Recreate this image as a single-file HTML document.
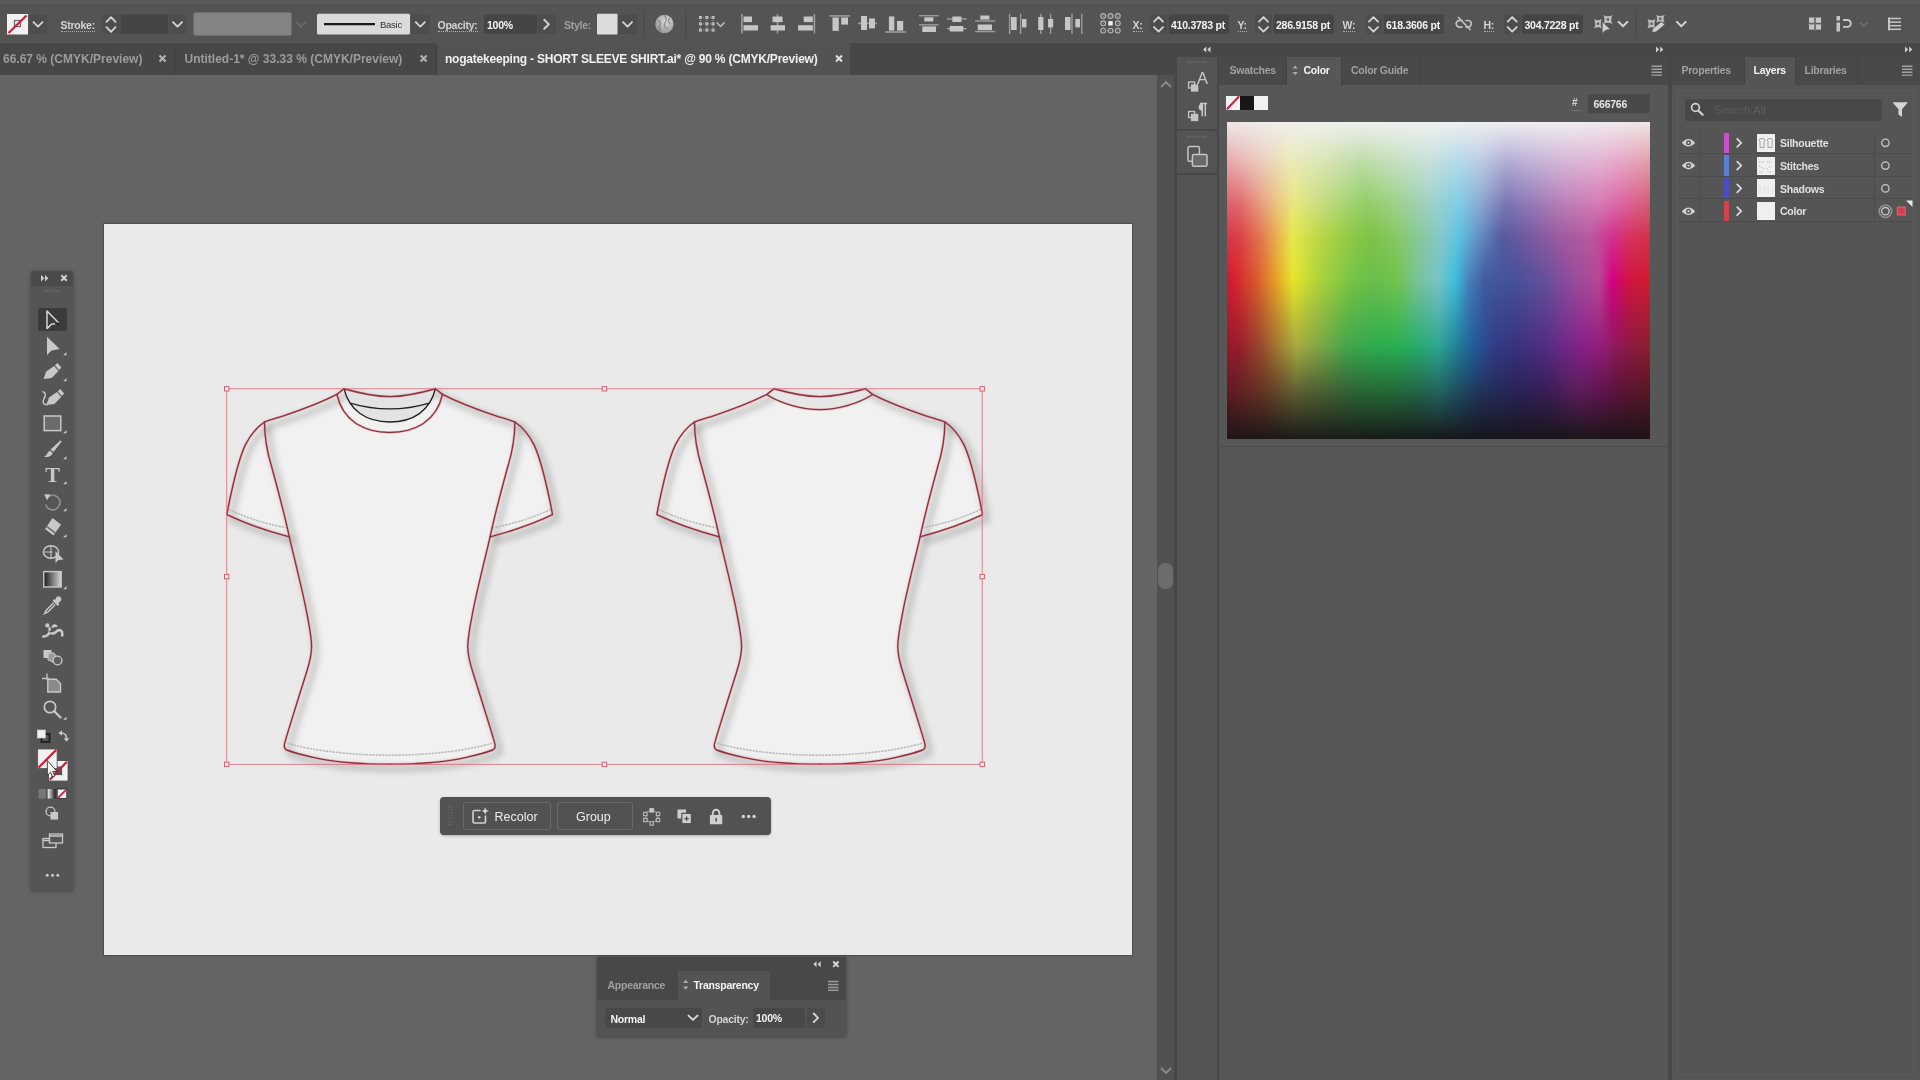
<!DOCTYPE html>
<html lang="en">
<head>
<meta charset="utf-8">
<title>nogatekeeping - SHORT SLEEVE SHIRT.ai</title>
<style>
html,body{margin:0;padding:0;background:#646464;}
body{width:1920px;height:1080px;overflow:hidden;position:relative;font-family:"Liberation Sans",sans-serif;font-size:11px;color:#d4d4d4;}
.a{position:absolute;}
.t{position:absolute;white-space:nowrap;line-height:14px;height:14px;font-size:10.5px;font-weight:bold;letter-spacing:-0.25px;filter:blur(0.3px);}
.dim{color:#a0a0a0;}
.wh{color:#f4f4f4;}
svg{position:absolute;overflow:visible;}
.fld{position:absolute;background:#464646;border-radius:2px;}
.btn{position:absolute;background:#4e4e4e;border-radius:2px;}
.ic{fill:#cfcfcf;}
.st{fill:none;stroke:#cfcfcf;stroke-width:1.6;stroke-linecap:round;stroke-linejoin:round;}
</style>
</head>
<body>
<!-- ===== base regions ===== -->
<div class="a" id="canvas" style="left:0;top:75px;width:1157px;height:1005px;background:#646464;"></div>
<div class="a" id="artboard" style="left:104px;top:224px;width:1028px;height:731px;background:#eaeaea;box-shadow:0 0 0 1px #4f4f4f, 0 0 3px rgba(0,0,0,.25);"></div>
<div class="a" id="ctrlbar" style="left:0;top:0;width:1920px;height:43px;background:#545454;"></div>
<div class="a" style="left:0;top:0;width:1920px;height:4px;background:#5a5a5a;"></div>
<div class="a" id="tabbar" style="left:0;top:43px;width:1920px;height:32px;background:#474747;"></div>
<!-- scrollbar -->
<div class="a" style="left:1157px;top:75px;width:17px;height:1005px;background:#515151;"></div>
<div class="a" style="left:1158px;top:563px;width:15px;height:26px;border-radius:7px;background:#6c6c6c;"></div>
<svg style="left:1159px;top:79px" width="14" height="10"><path class="st" d="M2.5 7.5 L7 3 L11.5 7.5" style="stroke:#8a8a8a;stroke-width:1.8"/></svg>
<svg style="left:1159px;top:1066px" width="14" height="10"><path class="st" d="M2.5 2.5 L7 7 L11.5 2.5" style="stroke:#8a8a8a;stroke-width:1.8"/></svg>
<!-- right docks -->
<div class="a" style="left:1174px;top:43px;width:746px;height:1037px;background:#474747;"></div>
<div class="a" id="dock" style="left:1177px;top:57px;width:40px;height:1023px;background:#545454;"></div>
<div class="a" id="colpanel" style="left:1219px;top:57px;width:449px;height:1023px;background:#575757;"></div>
<div class="a" id="rpanel" style="left:1672px;top:57px;width:248px;height:1023px;background:#555555;"></div>
<!-- ===== control bar ===== -->
<svg style="left:0;top:0" width="1920" height="43" viewBox="0 0 1920 43">
<rect x="7.0" y="14.0" width="21.0" height="20.5" fill="#f1f1f1" />
<rect x="14.5" y="20.5" width="6" height="6" fill="none" stroke="#666" stroke-width="1.2"/>
<line x1="8.5" y1="33.0" x2="26.5" y2="15.5" stroke="#c8203c" stroke-width="2.2" />
<rect x="29.5" y="14.5" width="17.5" height="19.5" fill="#4d4d4d" rx="2"/>
<path d="M33.5 22.1 L38.0 26.6 L42.5 22.1" fill="none" stroke="#d2d2d2" stroke-width="1.9" stroke-linecap="round" stroke-linejoin="round"/>
<rect x="102.0" y="14.5" width="18.0" height="19.5" fill="#4d4d4d" rx="2"/>
<path d="M106.5 21.8 L111.0 17.2 L115.5 21.8" fill="none" stroke="#d2d2d2" stroke-width="1.9" stroke-linecap="round" stroke-linejoin="round"/>
<path d="M106.5 27.2 L111.0 31.8 L115.5 27.2" fill="none" stroke="#d2d2d2" stroke-width="1.9" stroke-linecap="round" stroke-linejoin="round"/>
<rect x="120.6" y="14.5" width="47.4" height="19.5" fill="#454545" />
<rect x="168.6" y="14.5" width="17.9" height="19.5" fill="#4d4d4d" rx="2"/>
<path d="M173.0 22.1 L177.5 26.6 L182.0 22.1" fill="none" stroke="#d2d2d2" stroke-width="1.9" stroke-linecap="round" stroke-linejoin="round"/>
<rect x="193.5" y="12.5" width="98.0" height="23.1" fill="#848484" rx="1.5"/>
<path d="M296.5 22.1 L301.0 26.6 L305.5 22.1" fill="none" stroke="#6a6a6a" stroke-width="1.9" stroke-linecap="round" stroke-linejoin="round"/>
<rect x="317.0" y="13.7" width="93.0" height="20.8" fill="#dadada" rx="1.5"/>
<line x1="324.0" y1="24.2" x2="375.0" y2="24.2" stroke="#1a1a1a" stroke-width="2.2" />
<rect x="411.0" y="14.5" width="18.5" height="19.5" fill="#4d4d4d" rx="2"/>
<path d="M415.8 22.1 L420.3 26.6 L424.8 22.1" fill="none" stroke="#d2d2d2" stroke-width="1.9" stroke-linecap="round" stroke-linejoin="round"/>
<rect x="484.0" y="14.5" width="53.0" height="19.5" fill="#454545" rx="2"/>
<rect x="537.6" y="14.5" width="18.4" height="19.5" fill="#4d4d4d" rx="2"/>
<path d="M544.2 19.8 L548.8 24.3 L544.2 28.8" fill="none" stroke="#d2d2d2" stroke-width="1.9" stroke-linecap="round" stroke-linejoin="round"/>
<rect x="597.0" y="13.7" width="20.5" height="20.8" fill="#dcdcdc" rx="1"/>
<rect x="618.3" y="14.5" width="18.7" height="19.5" fill="#4d4d4d" rx="2"/>
<path d="M623.0 22.1 L627.5 26.6 L632.0 22.1" fill="none" stroke="#d2d2d2" stroke-width="1.9" stroke-linecap="round" stroke-linejoin="round"/>
<line x1="644.0" y1="10.0" x2="644.0" y2="39.0" stroke="#4b4b4b" stroke-width="1.2" />
<line x1="686.0" y1="10.0" x2="686.0" y2="39.0" stroke="#4b4b4b" stroke-width="1.2" />
<defs><radialGradient id="gl" cx="0.6" cy="0.35" r="0.75"><stop offset="0" stop-color="#dcdcdc"/><stop offset="1" stop-color="#8e8e8e"/></radialGradient></defs>
<circle cx="664.4" cy="24" r="9.2" fill="url(#gl)"/>
<path d="M658 20 q3 2 2 5 q-2 3 1 6 M664 15 q4 4 1 8 q-2 4 3 6 M670 18 q-3 3 0 6" fill="none" stroke="#7c7c7c" stroke-width="1.3" opacity=".8"/>
<rect x="699.0" y="16.0" width="3.0" height="3.0" fill="#c6c6c6" />
<rect x="699.0" y="22.3" width="3.0" height="3.0" fill="#c6c6c6" />
<rect x="699.0" y="28.6" width="3.0" height="3.0" fill="#c6c6c6" />
<rect x="705.3" y="16.0" width="3.0" height="3.0" fill="#c6c6c6" />
<rect x="705.3" y="22.3" width="3.0" height="3.0" fill="#c6c6c6" />
<rect x="705.3" y="28.6" width="3.0" height="3.0" fill="#c6c6c6" />
<rect x="711.6" y="16.0" width="3.0" height="3.0" fill="#c6c6c6" />
<rect x="711.6" y="22.3" width="3.0" height="3.0" fill="#c6c6c6" />
<rect x="711.6" y="28.6" width="3.0" height="3.0" fill="#c6c6c6" />
<line x1="700.5" y1="17.5" x2="714.0" y2="17.5" stroke="#9a9a9a" stroke-width="1" stroke-dasharray="1.2 1.2"/>
<line x1="700.5" y1="17.5" x2="700.5" y2="31.0" stroke="#9a9a9a" stroke-width="1" stroke-dasharray="1.2 1.2"/>
<line x1="700.5" y1="23.8" x2="714.0" y2="23.8" stroke="#9a9a9a" stroke-width="1" stroke-dasharray="1.2 1.2"/>
<line x1="706.8" y1="17.5" x2="706.8" y2="31.0" stroke="#9a9a9a" stroke-width="1" stroke-dasharray="1.2 1.2"/>
<line x1="700.5" y1="30.1" x2="714.0" y2="30.1" stroke="#9a9a9a" stroke-width="1" stroke-dasharray="1.2 1.2"/>
<line x1="713.1" y1="17.5" x2="713.1" y2="31.0" stroke="#9a9a9a" stroke-width="1" stroke-dasharray="1.2 1.2"/>
<path d="M717.1 22.9 L720.6 26.4 L724.1 22.9" fill="none" stroke="#b4b4b4" stroke-width="1.5" stroke-linecap="round" stroke-linejoin="round"/>
<line x1="741.9" y1="14.0" x2="741.9" y2="33.4" stroke="#9c9c9c" stroke-width="1.6" />
<rect x="743.5" y="16.5" width="8.5" height="5.6" fill="#c6c6c6" />
<rect x="743.5" y="25.2" width="14.5" height="5.3" fill="#c6c6c6" />
<line x1="777.5" y1="14.0" x2="777.5" y2="33.4" stroke="#9c9c9c" stroke-width="1.6" />
<rect x="772.5" y="16.5" width="10.0" height="5.6" fill="#c6c6c6" />
<rect x="770.6" y="25.2" width="14.4" height="5.3" fill="#c6c6c6" />
<line x1="814.4" y1="14.0" x2="814.4" y2="33.4" stroke="#9c9c9c" stroke-width="1.6" />
<rect x="803.7" y="16.5" width="9.1" height="5.6" fill="#c6c6c6" />
<rect x="798.0" y="25.2" width="14.8" height="5.3" fill="#c6c6c6" />
<line x1="829.4" y1="15.9" x2="850.0" y2="15.9" stroke="#9c9c9c" stroke-width="1.6" />
<rect x="832.5" y="17.5" width="6.3" height="13.4" fill="#c6c6c6" />
<rect x="841.2" y="17.5" width="6.8" height="7.1" fill="#c6c6c6" />
<line x1="858.0" y1="23.4" x2="877.0" y2="23.4" stroke="#9c9c9c" stroke-width="1.6" />
<rect x="861.0" y="16.0" width="6.0" height="14.0" fill="#c6c6c6" />
<rect x="869.0" y="18.4" width="6.0" height="10.0" fill="#c6c6c6" />
<line x1="885.0" y1="32.0" x2="906.0" y2="32.0" stroke="#9c9c9c" stroke-width="1.6" />
<rect x="888.9" y="16.4" width="5.4" height="14.2" fill="#c6c6c6" />
<rect x="897.0" y="21.0" width="6.2" height="9.6" fill="#c6c6c6" />
<line x1="919.0" y1="15.7" x2="938.6" y2="15.7" stroke="#9c9c9c" stroke-width="1.4" />
<line x1="919.0" y1="24.8" x2="938.6" y2="24.8" stroke="#9c9c9c" stroke-width="1.4" />
<rect x="924.3" y="17.3" width="9.1" height="4.2" fill="#c6c6c6" />
<rect x="922.3" y="26.4" width="13.7" height="5.6" fill="#c6c6c6" />
<line x1="947.0" y1="19.0" x2="966.6" y2="19.0" stroke="#9c9c9c" stroke-width="1.4" />
<line x1="947.0" y1="28.7" x2="966.6" y2="28.7" stroke="#9c9c9c" stroke-width="1.4" />
<rect x="952.3" y="16.5" width="9.1" height="5.5" fill="#c6c6c6" />
<rect x="949.7" y="26.0" width="13.6" height="5.5" fill="#c6c6c6" />
<line x1="975.0" y1="21.0" x2="995.2" y2="21.0" stroke="#9c9c9c" stroke-width="1.4" />
<line x1="975.0" y1="31.6" x2="995.2" y2="31.6" stroke="#9c9c9c" stroke-width="1.4" />
<rect x="980.3" y="15.5" width="9.1" height="4.1" fill="#c6c6c6" />
<rect x="977.7" y="24.5" width="14.3" height="5.7" fill="#c6c6c6" />
<line x1="1009.6" y1="13.8" x2="1009.6" y2="34.0" stroke="#9c9c9c" stroke-width="1.4" />
<line x1="1020.6" y1="13.8" x2="1020.6" y2="34.0" stroke="#9c9c9c" stroke-width="1.4" />
<rect x="1011.0" y="17.0" width="5.7" height="13.0" fill="#c6c6c6" />
<rect x="1022.0" y="19.0" width="4.5" height="8.4" fill="#c6c6c6" />
<line x1="1040.8" y1="13.8" x2="1040.8" y2="34.0" stroke="#9c9c9c" stroke-width="1.4" />
<line x1="1050.6" y1="13.8" x2="1050.6" y2="34.0" stroke="#9c9c9c" stroke-width="1.4" />
<rect x="1038.2" y="17.0" width="5.2" height="13.0" fill="#c6c6c6" />
<rect x="1048.0" y="19.0" width="5.2" height="8.4" fill="#c6c6c6" />
<line x1="1072.0" y1="13.8" x2="1072.0" y2="34.0" stroke="#9c9c9c" stroke-width="1.4" />
<line x1="1081.8" y1="13.8" x2="1081.8" y2="34.0" stroke="#9c9c9c" stroke-width="1.4" />
<rect x="1065.0" y="17.0" width="5.5" height="13.0" fill="#c6c6c6" />
<rect x="1075.3" y="19.0" width="4.7" height="8.4" fill="#c6c6c6" />
<circle cx="1103.2" cy="16.0" r="2.4" fill="none" stroke="#b8b8b8" stroke-width="1.1"/>
<circle cx="1103.2" cy="23.3" r="2.4" fill="none" stroke="#b8b8b8" stroke-width="1.1"/>
<circle cx="1103.2" cy="30.6" r="2.4" fill="none" stroke="#b8b8b8" stroke-width="1.1"/>
<circle cx="1110.5" cy="16.0" r="2.4" fill="none" stroke="#b8b8b8" stroke-width="1.1"/>
<rect x="1108.3" y="21.1" width="4.4" height="4.4" fill="#f0f0f0" />
<circle cx="1110.5" cy="30.6" r="2.4" fill="none" stroke="#b8b8b8" stroke-width="1.1"/>
<circle cx="1117.8" cy="16.0" r="2.4" fill="none" stroke="#b8b8b8" stroke-width="1.1"/>
<circle cx="1117.8" cy="23.3" r="2.4" fill="none" stroke="#b8b8b8" stroke-width="1.1"/>
<circle cx="1117.8" cy="30.6" r="2.4" fill="none" stroke="#b8b8b8" stroke-width="1.1"/>
<rect x="1103.2" y="16" width="14.6" height="14.6" fill="none" stroke="#9a9a9a" stroke-width="1" stroke-dasharray="1.2 1.2"/>
<rect x="1150.0" y="14.5" width="17.0" height="19.5" fill="#4d4d4d" rx="2"/>
<path d="M1154.0 21.6 L1158.5 17.1 L1163.0 21.6" fill="none" stroke="#d2d2d2" stroke-width="1.9" stroke-linecap="round" stroke-linejoin="round"/>
<path d="M1154.0 27.1 L1158.5 31.6 L1163.0 27.1" fill="none" stroke="#d2d2d2" stroke-width="1.9" stroke-linecap="round" stroke-linejoin="round"/>
<rect x="1168.7" y="14.5" width="60.0" height="19.5" fill="#454545" rx="2"/>
<rect x="1255.0" y="14.5" width="17.0" height="19.5" fill="#4d4d4d" rx="2"/>
<path d="M1259.0 21.6 L1263.5 17.1 L1268.0 21.6" fill="none" stroke="#d2d2d2" stroke-width="1.9" stroke-linecap="round" stroke-linejoin="round"/>
<path d="M1259.0 27.1 L1263.5 31.6 L1268.0 27.1" fill="none" stroke="#d2d2d2" stroke-width="1.9" stroke-linecap="round" stroke-linejoin="round"/>
<rect x="1273.7" y="14.5" width="60.0" height="19.5" fill="#454545" rx="2"/>
<rect x="1365.0" y="14.5" width="17.0" height="19.5" fill="#4d4d4d" rx="2"/>
<path d="M1369.0 21.6 L1373.5 17.1 L1378.0 21.6" fill="none" stroke="#d2d2d2" stroke-width="1.9" stroke-linecap="round" stroke-linejoin="round"/>
<path d="M1369.0 27.1 L1373.5 31.6 L1378.0 27.1" fill="none" stroke="#d2d2d2" stroke-width="1.9" stroke-linecap="round" stroke-linejoin="round"/>
<rect x="1383.7" y="14.5" width="60.0" height="19.5" fill="#454545" rx="2"/>
<rect x="1503.7" y="14.5" width="17.0" height="19.5" fill="#4d4d4d" rx="2"/>
<path d="M1507.7 21.6 L1512.2 17.1 L1516.7 21.6" fill="none" stroke="#d2d2d2" stroke-width="1.9" stroke-linecap="round" stroke-linejoin="round"/>
<path d="M1507.7 27.1 L1512.2 31.6 L1516.7 27.1" fill="none" stroke="#d2d2d2" stroke-width="1.9" stroke-linecap="round" stroke-linejoin="round"/>
<rect x="1522.0" y="14.5" width="61.0" height="19.5" fill="#454545" rx="2"/>
<g fill="none" stroke="#c0c0c0" stroke-width="1.7" stroke-linecap="round"><path d="M1462 20.5 h-2.5 a3.3 3.3 0 0 0 0 6.6 h2.5 M1466 20.5 h2 a3.3 3.3 0 0 1 0 6.6 h-2"/><path d="M1458.5 17.5 L1470 29.5"/></g>
<path d="M1594.2 18.9 Q1598.0 21.6 1601.8 18.9 Q1599.7 23.8 1601.8 28.6 Q1598.0 25.9 1594.2 28.6 Q1596.3 23.8 1594.2 18.9Z" fill="#bcbcbc"/>
<rect x="1596.9" y="22.6" width="2.2" height="2.2" fill="#555"/>
<path d="M1603.3 14.9 Q1607.9 17.4 1612.5 14.9 Q1610.0 19.4 1612.5 24.0 Q1607.9 21.5 1603.3 24.0 Q1605.8 19.4 1603.3 14.9Z" fill="#bcbcbc"/>
<rect x="1606.8" y="18.3" width="2.2" height="2.2" fill="#555"/>
<path d="M1602.2 21.7 L1602.2 33.4 L1605.2 30.4 L1610.4 29.2 Z" fill="#cdcdcd" stroke="#545454" stroke-width=".7"/>
<path d="M1618.5 21.8 L1623.0 26.2 L1627.5 21.8" fill="none" stroke="#d2d2d2" stroke-width="1.9" stroke-linecap="round" stroke-linejoin="round"/>
<line x1="1636.0" y1="10.0" x2="1636.0" y2="39.0" stroke="#4b4b4b" stroke-width="1.2" />
<path d="M1647.5 18.9 Q1651.5 21.6 1655.5 18.9 Q1653.3 23.8 1655.5 28.6 Q1651.5 25.9 1647.5 28.6 Q1649.7 23.8 1647.5 18.9Z" fill="#bcbcbc"/>
<rect x="1650.4" y="22.6" width="2.2" height="2.2" fill="#555"/>
<path d="M1656.0 14.9 Q1660.3 17.0 1664.7 14.9 Q1662.3 18.7 1664.7 22.5 Q1660.3 20.4 1656.0 22.5 Q1658.4 18.7 1656.0 14.9Z" fill="#bcbcbc"/>
<rect x="1659.2" y="17.6" width="2.2" height="2.2" fill="#555"/>
<path d="M1651.8 32.3 L1652.8 28.6 L1661.6 21.6 L1664.9 24.6 L1656 32 Z" fill="#cdcdcd" stroke="#545454" stroke-width=".7"/>
<path d="M1676.8 21.8 L1681.3 26.2 L1685.8 21.8" fill="none" stroke="#d2d2d2" stroke-width="1.9" stroke-linecap="round" stroke-linejoin="round"/>
<rect x="1809.0" y="17.5" width="5.3" height="5.3" fill="#c6c6c6" />
<rect x="1815.8" y="17.5" width="5.3" height="5.3" fill="#c6c6c6" />
<rect x="1809.0" y="24.3" width="5.3" height="5.3" fill="#c6c6c6" />
<rect x="1815.8" y="24.3" width="5.3" height="5.3" fill="#c6c6c6" />
<line x1="1808.0" y1="24.0" x2="1822.0" y2="24.0" stroke="#8a8a8a" stroke-width="1" stroke-dasharray="1.5 1.5"/>
<line x1="1815.0" y1="17.0" x2="1815.0" y2="31.0" stroke="#8a8a8a" stroke-width="1" stroke-dasharray="1.5 1.5"/>
<rect x="1836.5" y="16.0" width="3.5" height="4.5" fill="#c6c6c6" />
<rect x="1836.5" y="22.5" width="3.5" height="9.0" fill="#c6c6c6" />
<path d="M1843 20 h4.5 a3.4 3.4 0 0 1 0 6.8 h-4.5" fill="none" stroke="#c6c6c6" stroke-width="1.8"/>
<path d="M1860.2 22.6 L1863.7 26.1 L1867.2 22.6" fill="none" stroke="#6e6e6e" stroke-width="1.5" stroke-linecap="round" stroke-linejoin="round"/>
<line x1="1888.0" y1="18.5" x2="1901.0" y2="18.5" stroke="#c6c6c6" stroke-width="1.5" />
<line x1="1888.0" y1="22.1" x2="1901.0" y2="22.1" stroke="#c6c6c6" stroke-width="1.5" />
<line x1="1888.0" y1="25.7" x2="1901.0" y2="25.7" stroke="#c6c6c6" stroke-width="1.5" />
<line x1="1888.0" y1="29.3" x2="1901.0" y2="29.3" stroke="#c6c6c6" stroke-width="1.5" />
<rect x="1888.0" y="17.6" width="2.0" height="12.8" fill="#c6c6c6" />
</svg>
<div class="t " style="left:60.5px;top:18px;border-bottom:1px dotted #b0b0b0;height:13px;">Stroke:</div>
<div class="t " style="left:380px;top:18px;color:#333;font-size:9.5px;font-weight:normal;">Basic</div>
<div class="t " style="left:437.5px;top:18px;border-bottom:1px dotted #b0b0b0;height:13px;">Opacity:</div>
<div class="t wh" style="left:487px;top:17.5px;">100%</div>
<div class="t dim" style="left:564px;top:18px;">Style:</div>
<div class="t " style="left:1132.5px;top:18px;border-bottom:1px dotted #b0b0b0;height:13px;">X:</div>
<div class="t wh" style="left:1171px;top:17.5px;">410.3783 pt</div>
<div class="t " style="left:1237.5px;top:18px;border-bottom:1px dotted #b0b0b0;height:13px;">Y:</div>
<div class="t wh" style="left:1276px;top:17.5px;">286.9158 pt</div>
<div class="t " style="left:1342.5px;top:18px;border-bottom:1px dotted #b0b0b0;height:13px;">W:</div>
<div class="t wh" style="left:1386px;top:17.5px;">618.3606 pt</div>
<div class="t " style="left:1483.5px;top:18px;border-bottom:1px dotted #b0b0b0;height:13px;">H:</div>
<div class="t wh" style="left:1524.5px;top:17.5px;">304.7228 pt</div>
<!-- ===== document tabs ===== -->
<div class="a" style="left:436px;top:43px;width:414px;height:32px;background:#535353;"></div>
<div class="a" style="left:174px;top:45px;width:1px;height:30px;background:#3e3e3e;"></div>
<div class="a" style="left:436px;top:45px;width:1px;height:30px;background:#3e3e3e;"></div>
<div class="t" style="left:3px;top:51.5px;font-size:12px;letter-spacing:0;color:#9c9c9c;">66.67 % (CMYK/Preview)</div>
<div class="t" style="left:184.5px;top:51.5px;font-size:12px;letter-spacing:0;color:#9c9c9c;">Untitled-1* @ 33.33 % (CMYK/Preview)</div>
<div class="t" style="left:445px;top:51.5px;font-size:12px;letter-spacing:-0.21px;color:#f0f0f0;">nogatekeeping - SHORT SLEEVE SHIRT.ai* @ 90 % (CMYK/Preview)</div>
<svg style="left:0;top:43px" width="860" height="32" viewBox="0 43 860 32">
<g fill="none" stroke-width="2" stroke-linecap="butt">
<path d="M159.5 55.5 l6 6 m0 -6 l-6 6" stroke="#b4b4b4"/>
<path d="M420.7 55.5 l6 6 m0 -6 l-6 6" stroke="#b4b4b4"/>
<path d="M836 55.5 l6 6 m0 -6 l-6 6" stroke="#e2e2e2"/>
</g>
</svg>
<!-- ===== tools panel ===== -->
<div class="a" style="left:31px;top:271px;width:42px;height:619px;background:#555555;border-radius:3px;box-shadow:0 1px 4px rgba(0,0,0,.35);"></div>
<div class="a" style="left:31px;top:271px;width:42px;height:15px;background:#4a4a4a;border-radius:3px 3px 0 0;"></div>
<div class="a" style="left:38px;top:307.5px;width:29px;height:23px;background:#3b3b3b;border-radius:2.5px;"></div>
<svg style="left:28px;top:265px" width="50" height="630" viewBox="28 265 50 630">
<defs>
<linearGradient id="tg1" x1="0" x2="1"><stop offset="0" stop-color="#1c1c1c"/><stop offset="1" stop-color="#d6d6d6"/></linearGradient>
<linearGradient id="tg2" x1="0" x2="1"><stop offset="0" stop-color="#f2f2f2"/><stop offset="1" stop-color="#1a1a1a"/></linearGradient>
</defs>
<!-- header -->
<path d="M41 275 l3.4 3.2 -3.4 3.2z M45 275 l3.4 3.2 -3.4 3.2z" fill="#cfcfcf"/>
<path d="M61.3 275.3 l5.4 5.4 m0 -5.4 l-5.4 5.4" stroke="#d4d4d4" stroke-width="2" fill="none"/>
<path d="M44 290.7 h16" stroke="#6e6e6e" stroke-width="1.6" stroke-dasharray="1.4 1.4"/>
<g fill="#c8c8c8">
<!-- selection (outline) -->
<path d="M47 311 L47 328.6 L51.4 324.3 L58.8 323 Z" fill="#3b3b3b" stroke="#d6d6d6" stroke-width="1.5" stroke-linejoin="round"/>
<path d="M55 323.4 h4.5" stroke="#1d1d1d" stroke-width="1.6"/>
<!-- direct selection -->
<path d="M47 336.7 L47 355 L51.6 350.6 L59.7 349 Z"/>
<path d="M66.5 352 v3.3 h-3.3z"/>
<!-- pen -->
<path d="M43.6 379 L46.2 371.6 L54.2 366 L58.4 371 L51.6 378 Z"/>
<path d="M54.9 365.2 L57.4 363 L61.4 367.6 L59 370 Z"/>
<path d="M66.5 378 v3.3 h-3.3z"/>
<!-- curvature -->
<path d="M46.4 405 L49 397.6 L57 392 L61.2 397 L54.4 404 Z"/>
<path d="M57.7 391.2 L60.2 389 L64.2 393.6 L61.8 396 Z"/>
<path d="M42.5 391.5 c3.5 1 3.5 4 1.5 7 c-2 3.5 -1 6.5 3.5 6.3" fill="none" stroke="#c8c8c8" stroke-width="1.4"/>
<!-- rectangle -->
<rect x="44.2" y="416" width="16.6" height="14.6" fill="#6b6b6b" stroke="#c8c8c8" stroke-width="1.5"/>
<path d="M66.5 430 v3.3 h-3.3z"/>
<!-- brush -->
<path d="M60.6 440.3 L61.6 441.4 L53.5 452 L50.6 449.6 Z"/>
<path d="M49.8 450.4 L52.7 452.9 C51.5 456.5 47 457.4 44 457 C46.8 455.6 47 452.6 49.8 450.4 Z"/>
<path d="M66.5 456 v3.3 h-3.3z"/>
<!-- eraser -->
<path d="M52.5 518 L61 524.5 L53.5 535.5 L45 529 Z"/>
<path d="M46.8 526.6 L55.2 533" stroke="#555" stroke-width="1.3"/>
<path d="M66.5 534 v3.3 h-3.3z"/>
<!-- rotate -->
<path d="M49 496.2 A7.3 7.3 0 1 1 45.6 504.5" fill="none" stroke="#8f8f8f" stroke-width="1.6"/>
<path d="M44.2 494.3 L50.6 494.6 L47 500.3 Z"/>
<path d="M66.5 508 v3.3 h-3.3z"/>
<!-- shape builder -->
<ellipse cx="51" cy="552" rx="7.6" ry="6.2" fill="none" stroke="#c8c8c8" stroke-width="1.4"/>
<path d="M51 546 v12 M43.6 552 h9" stroke="#c8c8c8" stroke-width="1.1" fill="none"/>
<path d="M55.5 551 L55.5 563 L58.5 560 L63.5 559.6 Z"/>
<!-- gradient -->
<rect x="43.8" y="571.6" width="17.4" height="15.4" fill="url(#tg1)" stroke="#c8c8c8" stroke-width="1.4"/>
<path d="M66.5 586 v3.3 h-3.3z"/>
<!-- eyedropper -->
<path d="M56.4 597.3 a2.8 2.8 0 0 1 4 4 l-2 2 1 1 -1.6 1.6 -5.2 -5.2 1.6 -1.6 1 1z"/>
<path d="M53.6 602.8 L46 610.4 L44.5 613.6 L47.7 612.2 L55.3 604.6" fill="none" stroke="#c8c8c8" stroke-width="1.4"/>
<!-- puppet warp -->
<g fill="none" stroke="#c8c8c8" stroke-width="2.5" stroke-linecap="round" stroke-linejoin="round">
<path d="M43.2 636.6 q4.300 -.3 6 -3.600 q1.300 -2.700 .3 -4.600"/>
<path d="M49.500 632.500 q3.500 2.200 6.500 -.5 q2.200 -2.600 4.600 -1.600 q2.200 1.200 1.600 5.200"/>
<path d="M52.800 626.600 q1.600 -1.600 3.400 -.6"/>
</g>
<circle cx="47.300" cy="625.400" r="2.100"/>
<circle cx="50.300" cy="631.500" r="1" fill="#555"/>
<!-- blend -->
<rect x="43.5" y="650" width="8" height="8"/>
<path d="M48 653 h6 l3 4 -4 5 -5 -2z" fill="#9a9a9a" stroke="#c8c8c8" stroke-width="1"/>
<circle cx="57.5" cy="660.5" r="4.4" fill="#5e5e5e" stroke="#c8c8c8" stroke-width="1.4"/>
<!-- artboard -->
<path d="M47 673.5 v6 M42 678.5 h7" stroke="#c8c8c8" stroke-width="1.3" fill="none"/>
<path d="M47.8 679.3 h8.400 l4.300 4.300 v8.400 h-12.700z" fill="#8a8a8a" stroke="#c8c8c8" stroke-width="1.4"/>
<!-- zoom -->
<circle cx="50" cy="707" r="5.700" fill="none" stroke="#c8c8c8" stroke-width="1.700"/>
<path d="M54.300 711.300 L60.500 717.500" stroke="#c8c8c8" stroke-width="2.300" stroke-linecap="round"/>
<path d="M66.500 716.500 v3.300 h-3.300z"/>
</g>
<!-- default fill/stroke mini -->
<rect x="41.500" y="734" width="8" height="8" fill="#555" stroke="#1e1e1e" stroke-width="1.800"/>
<rect x="37.300" y="730" width="8" height="8" fill="#f0f0f0" stroke="#cfcfcf" stroke-width=".6"/>
<!-- swap -->
<path d="M60.500 733 c4 -.5 6 2 6 5.500" fill="none" stroke="#c8c8c8" stroke-width="1.600"/>
<path d="M58.400 733 l3.600 -2.800 v5.600z M66.500 741.800 l-2.900 -3.600 h5.800z" fill="#c8c8c8"/>
<!-- stroke box (behind) -->
<rect x="49" y="761" width="18.600" height="19.600" fill="#f1f1f1"/>
<rect x="54.500" y="766.500" width="7.600" height="8.600" fill="#555"/>
<path d="M49.800 779.800 L66.800 761.800" stroke="#c4203c" stroke-width="2.200"/>
<!-- fill box -->
<rect x="37.700" y="749" width="19.400" height="19.500" fill="#f1f1f1" stroke="#555" stroke-width=".8"/>
<path d="M38.500 767.600 L56.300 749.800" stroke="#c4203c" stroke-width="2.200"/>
<!-- mouse cursor -->
<path d="M47.300 760.500 L47.300 775.500 L50.500 772.300 L52.700 777 L54.800 776 L52.700 771.500 L57 771.500 Z" fill="#f6f6f6" stroke="#333" stroke-width=".9" stroke-linejoin="round"/>
<!-- colour modes -->
<rect x="38.500" y="789" width="7.400" height="9.600" fill="#777"/>
<rect x="47.700" y="789" width="7.800" height="9.600" fill="url(#tg2)"/>
<rect x="57.200" y="789" width="9.600" height="9.600" fill="#f1f1f1" stroke="#222" stroke-width=".8"/>
<path d="M58 797.800 L66 789.800" stroke="#c4203c" stroke-width="1.800"/>
<!-- draw mode -->
<circle cx="50.500" cy="811.500" r="4.400" fill="none" stroke="#c8c8c8" stroke-width="1.300"/>
<rect x="50.500" y="812" width="7.600" height="7.600" fill="#c8c8c8"/>
<!-- screen mode -->
<rect x="43" y="838.500" width="13" height="9" fill="#555" stroke="#c8c8c8" stroke-width="1.300"/>
<rect x="49.500" y="834" width="13" height="9" fill="#555" stroke="#c8c8c8" stroke-width="1.300"/>
<path d="M49.500 836 h13 M43 840.500 h6" stroke="#c8c8c8" stroke-width="1.600"/>
<!-- more -->
<circle cx="47.200" cy="875.300" r="1.500" fill="#c8c8c8"/><circle cx="52.500" cy="875.300" r="1.500" fill="#c8c8c8"/><circle cx="57.800" cy="875.300" r="1.500" fill="#c8c8c8"/>
<!-- T tool uses real text below -->
</svg>
<div class="a" style="left:44px;top:463px;width:17px;height:24px;line-height:24px;text-align:center;font-family:'Liberation Serif',serif;font-size:22px;font-weight:bold;color:#c8c8c8;filter:blur(.25px);">T</div>
<svg style="left:62px;top:480px" width="6" height="6"><path d="M4.500 1 v3.300 h-3.300z" fill="#c8c8c8"/></svg>
<!-- ===== artwork ===== -->
<svg style="left:0;top:0" width="1157" height="1080" viewBox="0 0 1157 1080">
<defs><filter id="shb" x="-20%" y="-20%" width="140%" height="140%"><feGaussianBlur stdDeviation="3.2"/></filter></defs>
<g filter="url(#shb)" transform="translate(4.5,4.5)" fill="none" stroke="#000" stroke-opacity=".18" stroke-width="6" stroke-linecap="butt" stroke-linejoin="round">
<path d="M344.00,388.75 L336.90,394.4 C326.00,400 310.00,407 285.00,415.3 C275.00,418.5 268.00,420.5 264.50,422 C257.00,427 250.00,436 245.60,444.4 C241.00,454 236.00,472 232.50,487.5 C230.00,498 228.00,508 226.90,514.7 Q255.00,528 289.30,536.8 C293.00,553 300.00,580 305.60,606.7 C308.00,620 311.40,634 311.60,646 C311.70,654 309.80,662 306.80,671.5 C302.00,687 294.00,712 288.90,728.9 C287.00,735 285.50,740 284.40,744.4 C284.00,747.5 285.00,749.3 286.70,750 C300.00,755 325.00,760.5 343.30,762.2 C358.00,763.6 375.00,764.2 389.70,764.2 C404.40,764.20 421.40,763.60 436.10,762.20 C454.40,760.50 479.40,755.00 492.70,750.00 C494.40,749.30 495.40,747.50 495.00,744.40 C493.90,740.00 492.40,735.00 490.50,728.90 C485.40,712.00 477.40,687.00 472.60,671.50 C469.60,662.00 467.70,654.00 467.80,646.00 C468.00,634.00 471.40,620.00 473.80,606.70 C479.40,580.00 486.40,553.00 490.10,536.80 Q524.40,528.00 552.50,514.70 C551.40,508.00 549.40,498.00 546.90,487.50 C543.40,472.00 538.40,454.00 533.80,444.40 C529.40,436.00 522.40,427.00 514.90,422.00 C511.40,420.50 504.40,418.50 494.40,415.30 C469.40,407.00 453.40,400.00 442.50,394.40 L435.40,388.75 C418.40,393.6 403.70,396.6 389.70,396.6 C375.70,396.6 361.00,393.6 344.00,388.75 Z"/>
<path d="M264.50,422 C264.50,436 267.00,452 272.00,468 C278.00,490 284.00,512 289.30,536.8"/>
<path d="M514.90,422 C514.90,436 512.40,452 507.40,468 C501.40,490 495.40,512 490.10,536.8"/>
</g>
<path d="M344.00,388.75 L336.90,394.4 C326.00,400 310.00,407 285.00,415.3 C275.00,418.5 268.00,420.5 264.50,422 C257.00,427 250.00,436 245.60,444.4 C241.00,454 236.00,472 232.50,487.5 C230.00,498 228.00,508 226.90,514.7 Q255.00,528 289.30,536.8 C293.00,553 300.00,580 305.60,606.7 C308.00,620 311.40,634 311.60,646 C311.70,654 309.80,662 306.80,671.5 C302.00,687 294.00,712 288.90,728.9 C287.00,735 285.50,740 284.40,744.4 C284.00,747.5 285.00,749.3 286.70,750 C300.00,755 325.00,760.5 343.30,762.2 C358.00,763.6 375.00,764.2 389.70,764.2 C404.40,764.20 421.40,763.60 436.10,762.20 C454.40,760.50 479.40,755.00 492.70,750.00 C494.40,749.30 495.40,747.50 495.00,744.40 C493.90,740.00 492.40,735.00 490.50,728.90 C485.40,712.00 477.40,687.00 472.60,671.50 C469.60,662.00 467.70,654.00 467.80,646.00 C468.00,634.00 471.40,620.00 473.80,606.70 C479.40,580.00 486.40,553.00 490.10,536.80 Q524.40,528.00 552.50,514.70 C551.40,508.00 549.40,498.00 546.90,487.50 C543.40,472.00 538.40,454.00 533.80,444.40 C529.40,436.00 522.40,427.00 514.90,422.00 C511.40,420.50 504.40,418.50 494.40,415.30 C469.40,407.00 453.40,400.00 442.50,394.40 L435.40,388.75 C418.40,393.6 403.70,396.6 389.70,396.6 C375.70,396.6 361.00,393.6 344.00,388.75 Z" fill="#f1f1f1"/>
<clipPath id="clf"><path d="M344.00,388.75 L336.90,394.4 C326.00,400 310.00,407 285.00,415.3 C275.00,418.5 268.00,420.5 264.50,422 C257.00,427 250.00,436 245.60,444.4 C241.00,454 236.00,472 232.50,487.5 C230.00,498 228.00,508 226.90,514.7 Q255.00,528 289.30,536.8 C293.00,553 300.00,580 305.60,606.7 C308.00,620 311.40,634 311.60,646 C311.70,654 309.80,662 306.80,671.5 C302.00,687 294.00,712 288.90,728.9 C287.00,735 285.50,740 284.40,744.4 C284.00,747.5 285.00,749.3 286.70,750 C300.00,755 325.00,760.5 343.30,762.2 C358.00,763.6 375.00,764.2 389.70,764.2 C404.40,764.20 421.40,763.60 436.10,762.20 C454.40,760.50 479.40,755.00 492.70,750.00 C494.40,749.30 495.40,747.50 495.00,744.40 C493.90,740.00 492.40,735.00 490.50,728.90 C485.40,712.00 477.40,687.00 472.60,671.50 C469.60,662.00 467.70,654.00 467.80,646.00 C468.00,634.00 471.40,620.00 473.80,606.70 C479.40,580.00 486.40,553.00 490.10,536.80 Q524.40,528.00 552.50,514.70 C551.40,508.00 549.40,498.00 546.90,487.50 C543.40,472.00 538.40,454.00 533.80,444.40 C529.40,436.00 522.40,427.00 514.90,422.00 C511.40,420.50 504.40,418.50 494.40,415.30 C469.40,407.00 453.40,400.00 442.50,394.40 L435.40,388.75 C418.40,393.6 403.70,396.6 389.70,396.6 C375.70,396.6 361.00,393.6 344.00,388.75 Z"/></clipPath>
<g clip-path="url(#clf)"><g filter="url(#shb)" transform="translate(4.5,4.5)" fill="none" stroke="#000" stroke-opacity=".18" stroke-width="6" stroke-linecap="butt" stroke-linejoin="round">
<path d="M344.00,388.75 L336.90,394.4 C326.00,400 310.00,407 285.00,415.3 C275.00,418.5 268.00,420.5 264.50,422 C257.00,427 250.00,436 245.60,444.4 C241.00,454 236.00,472 232.50,487.5 C230.00,498 228.00,508 226.90,514.7 Q255.00,528 289.30,536.8 C293.00,553 300.00,580 305.60,606.7 C308.00,620 311.40,634 311.60,646 C311.70,654 309.80,662 306.80,671.5 C302.00,687 294.00,712 288.90,728.9 C287.00,735 285.50,740 284.40,744.4 C284.00,747.5 285.00,749.3 286.70,750 C300.00,755 325.00,760.5 343.30,762.2 C358.00,763.6 375.00,764.2 389.70,764.2 C404.40,764.20 421.40,763.60 436.10,762.20 C454.40,760.50 479.40,755.00 492.70,750.00 C494.40,749.30 495.40,747.50 495.00,744.40 C493.90,740.00 492.40,735.00 490.50,728.90 C485.40,712.00 477.40,687.00 472.60,671.50 C469.60,662.00 467.70,654.00 467.80,646.00 C468.00,634.00 471.40,620.00 473.80,606.70 C479.40,580.00 486.40,553.00 490.10,536.80 Q524.40,528.00 552.50,514.70 C551.40,508.00 549.40,498.00 546.90,487.50 C543.40,472.00 538.40,454.00 533.80,444.40 C529.40,436.00 522.40,427.00 514.90,422.00 C511.40,420.50 504.40,418.50 494.40,415.30 C469.40,407.00 453.40,400.00 442.50,394.40 L435.40,388.75 C418.40,393.6 403.70,396.6 389.70,396.6 C375.70,396.6 361.00,393.6 344.00,388.75 Z"/>
<path d="M264.50,422 C264.50,436 267.00,452 272.00,468 C278.00,490 284.00,512 289.30,536.8"/>
<path d="M514.90,422 C514.90,436 512.40,452 507.40,468 C501.40,490 495.40,512 490.10,536.8"/>
</g></g>
<path d="M344.00,388.75 C361.00,393.6 375.70,396.6 389.70,396.6 C403.70,396.6 418.40,393.6 435.40,388.75 C433.40,397.00 428.40,407.00 419.40,413.60 C410.40,420.00 400.40,422.00 389.70,422.00 C379.00,422.00 369.00,420.00 360.00,413.60 C351.00,407.00 346.00,397.00 344.00,388.75 Z" fill="#e3e3e3"/>
<g fill="none" stroke="#bcbcbc" stroke-width="1.6" stroke-dasharray="2.4 0.9">
<path d="M228.60,509.3 Q256.00,522.3 288.00,528"/><path d="M550.80,509.3 Q523.40,522.3 491.40,528"/><path d="M287.30,743.2 C315.00,751.5 355.00,755.2 389.70,755.2 C424.40,755.2 464.40,751.5 492.10,743.2"/>
</g>
<g fill="none" stroke="#e58a98" stroke-opacity=".45" stroke-width="2.6" stroke-linejoin="round" stroke-linecap="round">
<path d="M344.00,388.75 L336.90,394.4 C326.00,400 310.00,407 285.00,415.3 C275.00,418.5 268.00,420.5 264.50,422 C257.00,427 250.00,436 245.60,444.4 C241.00,454 236.00,472 232.50,487.5 C230.00,498 228.00,508 226.90,514.7 Q255.00,528 289.30,536.8 C293.00,553 300.00,580 305.60,606.7 C308.00,620 311.40,634 311.60,646 C311.70,654 309.80,662 306.80,671.5 C302.00,687 294.00,712 288.90,728.9 C287.00,735 285.50,740 284.40,744.4 C284.00,747.5 285.00,749.3 286.70,750 C300.00,755 325.00,760.5 343.30,762.2 C358.00,763.6 375.00,764.2 389.70,764.2"/>
<path d="M435.40,388.75 L442.50,394.4 C453.40,400 469.40,407 494.40,415.3 C504.40,418.5 511.40,420.5 514.90,422 C522.40,427 529.40,436 533.80,444.4 C538.40,454 543.40,472 546.90,487.5 C549.40,498 551.40,508 552.50,514.7 Q524.40,528 490.10,536.8 C486.40,553 479.40,580 473.80,606.7 C471.40,620 468.00,634 467.80,646 C467.70,654 469.60,662 472.60,671.5 C477.40,687 485.40,712 490.50,728.9 C492.40,735 493.90,740 495.00,744.4 C495.40,747.5 494.40,749.3 492.70,750 C479.40,755 454.40,760.5 436.10,762.2 C421.40,763.6 404.40,764.2 389.70,764.2"/>
<path d="M264.50,422 C264.50,436 267.00,452 272.00,468 C278.00,490 284.00,512 289.30,536.8"/>
<path d="M514.90,422 C514.90,436 512.40,452 507.40,468 C501.40,490 495.40,512 490.10,536.8"/>
<path d="M344.00,388.75 C361.00,393.6 375.70,396.6 389.70,396.6 C403.70,396.6 418.40,393.6 435.40,388.75"/>
<path d="M336.90,394.4 C339.00,404 345.00,416 356.00,423.5 C367.00,430.5 378.00,432.5 389.70,432.5 C401.40,432.5 412.40,430.5 423.40,423.5 C434.40,416 440.40,404 442.50,394.4"/>
</g>
<g fill="none" stroke="#8b323e" stroke-width="1.35" stroke-linejoin="round" stroke-linecap="round">
<path d="M344.00,388.75 L336.90,394.4 C326.00,400 310.00,407 285.00,415.3 C275.00,418.5 268.00,420.5 264.50,422 C257.00,427 250.00,436 245.60,444.4 C241.00,454 236.00,472 232.50,487.5 C230.00,498 228.00,508 226.90,514.7 Q255.00,528 289.30,536.8 C293.00,553 300.00,580 305.60,606.7 C308.00,620 311.40,634 311.60,646 C311.70,654 309.80,662 306.80,671.5 C302.00,687 294.00,712 288.90,728.9 C287.00,735 285.50,740 284.40,744.4 C284.00,747.5 285.00,749.3 286.70,750 C300.00,755 325.00,760.5 343.30,762.2 C358.00,763.6 375.00,764.2 389.70,764.2"/>
<path d="M435.40,388.75 L442.50,394.4 C453.40,400 469.40,407 494.40,415.3 C504.40,418.5 511.40,420.5 514.90,422 C522.40,427 529.40,436 533.80,444.4 C538.40,454 543.40,472 546.90,487.5 C549.40,498 551.40,508 552.50,514.7 Q524.40,528 490.10,536.8 C486.40,553 479.40,580 473.80,606.7 C471.40,620 468.00,634 467.80,646 C467.70,654 469.60,662 472.60,671.5 C477.40,687 485.40,712 490.50,728.9 C492.40,735 493.90,740 495.00,744.4 C495.40,747.5 494.40,749.3 492.70,750 C479.40,755 454.40,760.5 436.10,762.2 C421.40,763.6 404.40,764.2 389.70,764.2"/>
<path d="M264.50,422 C264.50,436 267.00,452 272.00,468 C278.00,490 284.00,512 289.30,536.8"/>
<path d="M514.90,422 C514.90,436 512.40,452 507.40,468 C501.40,490 495.40,512 490.10,536.8"/>
<path d="M344.00,388.75 C361.00,393.6 375.70,396.6 389.70,396.6 C403.70,396.6 418.40,393.6 435.40,388.75"/>
<path d="M336.90,394.4 C339.00,404 345.00,416 356.00,423.5 C367.00,430.5 378.00,432.5 389.70,432.5 C401.40,432.5 412.40,430.5 423.40,423.5 C434.40,416 440.40,404 442.50,394.4"/>
</g>
<g fill="none" stroke="#222" stroke-width="1.3" stroke-linecap="round">
<path d="M344.00,388.75 C346.00,397 351.00,407 360.00,413.6 C369.00,420 379.00,422 389.70,422 C400.40,422 410.40,420 419.40,413.6 C428.40,407 433.40,397 435.40,388.75"/><path d="M351.20,403.3 C365.00,407.5 378.00,408.8 389.70,408.8 C401.40,408.8 414.40,407.5 428.20,403.3"/>
</g>
<g filter="url(#shb)" transform="translate(4.5,4.5)" fill="none" stroke="#000" stroke-opacity=".18" stroke-width="6" stroke-linecap="butt" stroke-linejoin="round">
<path d="M774.00,388.75 L766.90,394.4 C756.00,400 740.00,407 715.00,415.3 C705.00,418.5 698.00,420.5 694.50,422 C687.00,427 680.00,436 675.60,444.4 C671.00,454 666.00,472 662.50,487.5 C660.00,498 658.00,508 656.90,514.7 Q685.00,528 719.30,536.8 C723.00,553 730.00,580 735.60,606.7 C738.00,620 741.40,634 741.60,646 C741.70,654 739.80,662 736.80,671.5 C732.00,687 724.00,712 718.90,728.9 C717.00,735 715.50,740 714.40,744.4 C714.00,747.5 715.00,749.3 716.70,750 C730.00,755 755.00,760.5 773.30,762.2 C788.00,763.6 805.00,764.2 819.70,764.2 C834.40,764.20 851.40,763.60 866.10,762.20 C884.40,760.50 909.40,755.00 922.70,750.00 C924.40,749.30 925.40,747.50 925.00,744.40 C923.90,740.00 922.40,735.00 920.50,728.90 C915.40,712.00 907.40,687.00 902.60,671.50 C899.60,662.00 897.70,654.00 897.80,646.00 C898.00,634.00 901.40,620.00 903.80,606.70 C909.40,580.00 916.40,553.00 920.10,536.80 Q954.40,528.00 982.50,514.70 C981.40,508.00 979.40,498.00 976.90,487.50 C973.40,472.00 968.40,454.00 963.80,444.40 C959.40,436.00 952.40,427.00 944.90,422.00 C941.40,420.50 934.40,418.50 924.40,415.30 C899.40,407.00 883.40,400.00 872.50,394.40 L865.40,388.75 C848.40,393.6 833.70,396.6 819.70,396.6 C805.70,396.6 791.00,393.6 774.00,388.75 Z"/>
<path d="M694.50,422 C694.50,436 697.00,452 702.00,468 C708.00,490 714.00,512 719.30,536.8"/>
<path d="M944.90,422 C944.90,436 942.40,452 937.40,468 C931.40,490 925.40,512 920.10,536.8"/>
</g>
<path d="M774.00,388.75 L766.90,394.4 C756.00,400 740.00,407 715.00,415.3 C705.00,418.5 698.00,420.5 694.50,422 C687.00,427 680.00,436 675.60,444.4 C671.00,454 666.00,472 662.50,487.5 C660.00,498 658.00,508 656.90,514.7 Q685.00,528 719.30,536.8 C723.00,553 730.00,580 735.60,606.7 C738.00,620 741.40,634 741.60,646 C741.70,654 739.80,662 736.80,671.5 C732.00,687 724.00,712 718.90,728.9 C717.00,735 715.50,740 714.40,744.4 C714.00,747.5 715.00,749.3 716.70,750 C730.00,755 755.00,760.5 773.30,762.2 C788.00,763.6 805.00,764.2 819.70,764.2 C834.40,764.20 851.40,763.60 866.10,762.20 C884.40,760.50 909.40,755.00 922.70,750.00 C924.40,749.30 925.40,747.50 925.00,744.40 C923.90,740.00 922.40,735.00 920.50,728.90 C915.40,712.00 907.40,687.00 902.60,671.50 C899.60,662.00 897.70,654.00 897.80,646.00 C898.00,634.00 901.40,620.00 903.80,606.70 C909.40,580.00 916.40,553.00 920.10,536.80 Q954.40,528.00 982.50,514.70 C981.40,508.00 979.40,498.00 976.90,487.50 C973.40,472.00 968.40,454.00 963.80,444.40 C959.40,436.00 952.40,427.00 944.90,422.00 C941.40,420.50 934.40,418.50 924.40,415.30 C899.40,407.00 883.40,400.00 872.50,394.40 L865.40,388.75 C848.40,393.6 833.70,396.6 819.70,396.6 C805.70,396.6 791.00,393.6 774.00,388.75 Z" fill="#f1f1f1"/>
<clipPath id="clb"><path d="M774.00,388.75 L766.90,394.4 C756.00,400 740.00,407 715.00,415.3 C705.00,418.5 698.00,420.5 694.50,422 C687.00,427 680.00,436 675.60,444.4 C671.00,454 666.00,472 662.50,487.5 C660.00,498 658.00,508 656.90,514.7 Q685.00,528 719.30,536.8 C723.00,553 730.00,580 735.60,606.7 C738.00,620 741.40,634 741.60,646 C741.70,654 739.80,662 736.80,671.5 C732.00,687 724.00,712 718.90,728.9 C717.00,735 715.50,740 714.40,744.4 C714.00,747.5 715.00,749.3 716.70,750 C730.00,755 755.00,760.5 773.30,762.2 C788.00,763.6 805.00,764.2 819.70,764.2 C834.40,764.20 851.40,763.60 866.10,762.20 C884.40,760.50 909.40,755.00 922.70,750.00 C924.40,749.30 925.40,747.50 925.00,744.40 C923.90,740.00 922.40,735.00 920.50,728.90 C915.40,712.00 907.40,687.00 902.60,671.50 C899.60,662.00 897.70,654.00 897.80,646.00 C898.00,634.00 901.40,620.00 903.80,606.70 C909.40,580.00 916.40,553.00 920.10,536.80 Q954.40,528.00 982.50,514.70 C981.40,508.00 979.40,498.00 976.90,487.50 C973.40,472.00 968.40,454.00 963.80,444.40 C959.40,436.00 952.40,427.00 944.90,422.00 C941.40,420.50 934.40,418.50 924.40,415.30 C899.40,407.00 883.40,400.00 872.50,394.40 L865.40,388.75 C848.40,393.6 833.70,396.6 819.70,396.6 C805.70,396.6 791.00,393.6 774.00,388.75 Z"/></clipPath>
<g clip-path="url(#clb)"><g filter="url(#shb)" transform="translate(4.5,4.5)" fill="none" stroke="#000" stroke-opacity=".18" stroke-width="6" stroke-linecap="butt" stroke-linejoin="round">
<path d="M774.00,388.75 L766.90,394.4 C756.00,400 740.00,407 715.00,415.3 C705.00,418.5 698.00,420.5 694.50,422 C687.00,427 680.00,436 675.60,444.4 C671.00,454 666.00,472 662.50,487.5 C660.00,498 658.00,508 656.90,514.7 Q685.00,528 719.30,536.8 C723.00,553 730.00,580 735.60,606.7 C738.00,620 741.40,634 741.60,646 C741.70,654 739.80,662 736.80,671.5 C732.00,687 724.00,712 718.90,728.9 C717.00,735 715.50,740 714.40,744.4 C714.00,747.5 715.00,749.3 716.70,750 C730.00,755 755.00,760.5 773.30,762.2 C788.00,763.6 805.00,764.2 819.70,764.2 C834.40,764.20 851.40,763.60 866.10,762.20 C884.40,760.50 909.40,755.00 922.70,750.00 C924.40,749.30 925.40,747.50 925.00,744.40 C923.90,740.00 922.40,735.00 920.50,728.90 C915.40,712.00 907.40,687.00 902.60,671.50 C899.60,662.00 897.70,654.00 897.80,646.00 C898.00,634.00 901.40,620.00 903.80,606.70 C909.40,580.00 916.40,553.00 920.10,536.80 Q954.40,528.00 982.50,514.70 C981.40,508.00 979.40,498.00 976.90,487.50 C973.40,472.00 968.40,454.00 963.80,444.40 C959.40,436.00 952.40,427.00 944.90,422.00 C941.40,420.50 934.40,418.50 924.40,415.30 C899.40,407.00 883.40,400.00 872.50,394.40 L865.40,388.75 C848.40,393.6 833.70,396.6 819.70,396.6 C805.70,396.6 791.00,393.6 774.00,388.75 Z"/>
<path d="M694.50,422 C694.50,436 697.00,452 702.00,468 C708.00,490 714.00,512 719.30,536.8"/>
<path d="M944.90,422 C944.90,436 942.40,452 937.40,468 C931.40,490 925.40,512 920.10,536.8"/>
</g></g>
<path d="M774.00,388.75 C791.00,393.6 805.70,396.6 819.70,396.6 C833.70,396.6 848.40,393.6 865.40,388.75 L871.9,395 C857.40,404.00 837.40,409.60 819.70,409.60 C802.00,409.60 782.00,404.00 767.50,395.00 Z" fill="#e6e6e6"/>
<g fill="none" stroke="#bcbcbc" stroke-width="1.6" stroke-dasharray="2.4 0.9">
<path d="M658.60,509.3 Q686.00,522.3 718.00,528"/><path d="M980.80,509.3 Q953.40,522.3 921.40,528"/><path d="M717.30,743.2 C745.00,751.5 785.00,755.2 819.70,755.2 C854.40,755.2 894.40,751.5 922.10,743.2"/>
</g>
<g fill="none" stroke="#e58a98" stroke-opacity=".45" stroke-width="2.6" stroke-linejoin="round" stroke-linecap="round">
<path d="M774.00,388.75 L766.90,394.4 C756.00,400 740.00,407 715.00,415.3 C705.00,418.5 698.00,420.5 694.50,422 C687.00,427 680.00,436 675.60,444.4 C671.00,454 666.00,472 662.50,487.5 C660.00,498 658.00,508 656.90,514.7 Q685.00,528 719.30,536.8 C723.00,553 730.00,580 735.60,606.7 C738.00,620 741.40,634 741.60,646 C741.70,654 739.80,662 736.80,671.5 C732.00,687 724.00,712 718.90,728.9 C717.00,735 715.50,740 714.40,744.4 C714.00,747.5 715.00,749.3 716.70,750 C730.00,755 755.00,760.5 773.30,762.2 C788.00,763.6 805.00,764.2 819.70,764.2"/>
<path d="M865.40,388.75 L872.50,394.4 C883.40,400 899.40,407 924.40,415.3 C934.40,418.5 941.40,420.5 944.90,422 C952.40,427 959.40,436 963.80,444.4 C968.40,454 973.40,472 976.90,487.5 C979.40,498 981.40,508 982.50,514.7 Q954.40,528 920.10,536.8 C916.40,553 909.40,580 903.80,606.7 C901.40,620 898.00,634 897.80,646 C897.70,654 899.60,662 902.60,671.5 C907.40,687 915.40,712 920.50,728.9 C922.40,735 923.90,740 925.00,744.4 C925.40,747.5 924.40,749.3 922.70,750 C909.40,755 884.40,760.5 866.10,762.2 C851.40,763.6 834.40,764.2 819.70,764.2"/>
<path d="M694.50,422 C694.50,436 697.00,452 702.00,468 C708.00,490 714.00,512 719.30,536.8"/>
<path d="M944.90,422 C944.90,436 942.40,452 937.40,468 C931.40,490 925.40,512 920.10,536.8"/>
<path d="M774.00,388.75 C791.00,393.6 805.70,396.6 819.70,396.6 C833.70,396.6 848.40,393.6 865.40,388.75"/>
<path d="M767.50,395 C782.00,404 802.00,409.6 819.70,409.6 C837.40,409.6 857.40,404 871.90,395"/>
</g>
<g fill="none" stroke="#8b323e" stroke-width="1.35" stroke-linejoin="round" stroke-linecap="round">
<path d="M774.00,388.75 L766.90,394.4 C756.00,400 740.00,407 715.00,415.3 C705.00,418.5 698.00,420.5 694.50,422 C687.00,427 680.00,436 675.60,444.4 C671.00,454 666.00,472 662.50,487.5 C660.00,498 658.00,508 656.90,514.7 Q685.00,528 719.30,536.8 C723.00,553 730.00,580 735.60,606.7 C738.00,620 741.40,634 741.60,646 C741.70,654 739.80,662 736.80,671.5 C732.00,687 724.00,712 718.90,728.9 C717.00,735 715.50,740 714.40,744.4 C714.00,747.5 715.00,749.3 716.70,750 C730.00,755 755.00,760.5 773.30,762.2 C788.00,763.6 805.00,764.2 819.70,764.2"/>
<path d="M865.40,388.75 L872.50,394.4 C883.40,400 899.40,407 924.40,415.3 C934.40,418.5 941.40,420.5 944.90,422 C952.40,427 959.40,436 963.80,444.4 C968.40,454 973.40,472 976.90,487.5 C979.40,498 981.40,508 982.50,514.7 Q954.40,528 920.10,536.8 C916.40,553 909.40,580 903.80,606.7 C901.40,620 898.00,634 897.80,646 C897.70,654 899.60,662 902.60,671.5 C907.40,687 915.40,712 920.50,728.9 C922.40,735 923.90,740 925.00,744.4 C925.40,747.5 924.40,749.3 922.70,750 C909.40,755 884.40,760.5 866.10,762.2 C851.40,763.6 834.40,764.2 819.70,764.2"/>
<path d="M694.50,422 C694.50,436 697.00,452 702.00,468 C708.00,490 714.00,512 719.30,536.8"/>
<path d="M944.90,422 C944.90,436 942.40,452 937.40,468 C931.40,490 925.40,512 920.10,536.8"/>
<path d="M774.00,388.75 C791.00,393.6 805.70,396.6 819.70,396.6 C833.70,396.6 848.40,393.6 865.40,388.75"/>
<path d="M767.50,395 C782.00,404 802.00,409.6 819.70,409.6 C837.40,409.6 857.40,404 871.90,395"/>
</g>
<rect x="226.7" y="388.75" width="755.5" height="375.65" fill="none" stroke="#dd6877" stroke-opacity=".8" stroke-width="1"/>
<rect x="224.5" y="386.6" width="4.4" height="4.4" fill="#f4f4f4" stroke="#d25e6e" stroke-width="1"/>
<rect x="224.5" y="574.4" width="4.4" height="4.4" fill="#f4f4f4" stroke="#d25e6e" stroke-width="1"/>
<rect x="224.5" y="762.2" width="4.4" height="4.4" fill="#f4f4f4" stroke="#d25e6e" stroke-width="1"/>
<rect x="602.2" y="386.6" width="4.4" height="4.4" fill="#f4f4f4" stroke="#d25e6e" stroke-width="1"/>
<rect x="602.2" y="762.2" width="4.4" height="4.4" fill="#f4f4f4" stroke="#d25e6e" stroke-width="1"/>
<rect x="980.0" y="386.6" width="4.4" height="4.4" fill="#f4f4f4" stroke="#d25e6e" stroke-width="1"/>
<rect x="980.0" y="574.4" width="4.4" height="4.4" fill="#f4f4f4" stroke="#d25e6e" stroke-width="1"/>
<rect x="980.0" y="762.2" width="4.4" height="4.4" fill="#f4f4f4" stroke="#d25e6e" stroke-width="1"/>
</svg>
<!-- ===== contextual task bar ===== -->
<div class="a" style="left:440px;top:797px;width:331px;height:38px;background:#525252;border-radius:4px;box-shadow:0 1px 3px rgba(0,0,0,.25);"></div>
<div class="a" style="left:462.5px;top:801.5px;width:88px;height:28px;border:1px solid #6a6a6a;border-radius:3px;box-sizing:border-box;"></div>
<div class="a" style="left:556.5px;top:801.5px;width:76px;height:28px;border:1px solid #6a6a6a;border-radius:3px;box-sizing:border-box;"></div>
<div class="t" style="left:494.5px;top:808.5px;font-size:12.5px;font-weight:normal;letter-spacing:0;color:#ececec;line-height:16px;height:16px;">Recolor</div>
<div class="t" style="left:576px;top:808.5px;font-size:12.5px;font-weight:normal;letter-spacing:0;color:#ececec;line-height:16px;height:16px;">Group</div>
<svg style="left:440px;top:797px" width="331" height="38" viewBox="440 797 331 38">
<path d="M449 806 v20 M452 806 v20" stroke="#676767" stroke-width="1.300" stroke-dasharray="1.500 1.500"/>
<!-- recolor icon -->
<path d="M480 810.500 h-5.500 a1.500 1.500 0 0 0 -1.500 1.500 v9.500 a1.500 1.500 0 0 0 1.500 1.500 h9.500 a1.500 1.500 0 0 0 1.500 -1.500 v-5.500" fill="none" stroke="#d2d2d2" stroke-width="1.600" stroke-linecap="round"/>
<circle cx="479.200" cy="817.300" r="1.300" fill="#d2d2d2"/>
<path d="M485.200 807.300 l1.100 2.600 2.600 1.100 -2.600 1.100 -1.100 2.600 -1.100 -2.600 -2.600 -1.100 2.600 -1.100z" fill="#d8d8d8"/>
<!-- edit path / circle of nodes -->
<circle cx="651.700" cy="816.300" r="6" fill="none" stroke="#8c8c8c" stroke-width="1.200"/>
<g fill="#525252" stroke="#bdbdbd" stroke-width="1.100">
<rect x="649.900" y="808.500" width="3.600" height="3.600" fill="#d0d0d0"/>
<rect x="656.300" y="812.300" width="3.400" height="3.400"/><rect x="656.300" y="818.300" width="3.400" height="3.400"/>
<rect x="650" y="821.800" width="3.400" height="3.400"/>
<rect x="643.700" y="812.300" width="3.400" height="3.400"/><rect x="643.700" y="818.300" width="3.400" height="3.400"/>
</g>
<!-- duplicate -->
<rect x="677.500" y="809.500" width="8.500" height="9" fill="#cfcfcf"/>
<rect x="681.800" y="813.300" width="9.600" height="10.400" fill="#cfcfcf" stroke="#525252" stroke-width="1.200"/>
<path d="M686.600 816.500 v4.500 M684.400 818.700 h4.400" stroke="#525252" stroke-width="1.300"/>
<!-- lock -->
<path d="M712.800 815.500 v-2.500 a3.300 3.300 0 0 1 6.600 0 v2.500" fill="none" stroke="#cfcfcf" stroke-width="1.900"/>
<rect x="709.900" y="815" width="12.400" height="9.300" rx="1" fill="#cfcfcf"/>
<rect x="715.400" y="818" width="1.500" height="3.600" fill="#525252"/>
<!-- more -->
<circle cx="743.300" cy="816.500" r="1.700" fill="#d4d4d4"/><circle cx="748.700" cy="816.500" r="1.700" fill="#d4d4d4"/><circle cx="754.100" cy="816.500" r="1.700" fill="#d4d4d4"/>
</svg>
<!-- ===== transparency floating panel ===== -->
<div class="a" style="left:597px;top:957px;width:249px;height:79px;background:#535353;box-shadow:0 1px 4px rgba(0,0,0,.35);"></div>
<div class="a" style="left:597px;top:957px;width:249px;height:43px;background:#484848;"></div>
<div class="a" style="left:678px;top:970.500px;width:92px;height:29.500px;background:#535353;"></div>
<div class="a" style="left:597px;top:970px;width:81px;height:1px;background:#444;"></div>
<div class="t dim" style="left:607.500px;top:978px;">Appearance</div>
<div class="t wh" style="left:693.500px;top:978px;">Transparency</div>
<div class="fld" style="left:605px;top:1008px;width:96.500px;height:19.500px;background:#484848;"></div>
<div class="t wh" style="left:610.500px;top:1011.500px;">Normal</div>
<div class="t" style="left:708.500px;top:1011.500px;">Opacity:</div>
<div class="fld" style="left:753px;top:1008px;width:52px;height:19.500px;background:#484848;"></div>
<div class="btn" style="left:806.500px;top:1008px;width:18.500px;height:19.500px;background:#4b4b4b;"></div>
<div class="t wh" style="left:756px;top:1011px;">100%</div>
<svg style="left:597px;top:957px" width="249" height="79" viewBox="597 957 249 79">
<path d="M816.500 961.200 l-3.200 3 3.200 3z M820.700 961.200 l-3.200 3 3.200 3z" fill="#cfcfcf"/>
<path d="M833.200 961.500 l5.400 5.400 m0 -5.400 l-5.400 5.400" stroke="#d8d8d8" stroke-width="2" fill="none"/>
<path d="M683 983 l2.700 -3.200 2.700 3.200z M683 986.500 l2.700 3.200 2.700 -3.200z" fill="#a8a8a8"/>
<path d="M828 981.500 h10.500 M828 984.500 h10.500 M828 987.500 h10.500 M828 990.300 h10.500" stroke="#9a9a9a" stroke-width="1.400"/>
<path d="M688.500 1015.600 l4.500 4.300 4.500 -4.300" fill="none" stroke="#d6d6d6" stroke-width="1.900" stroke-linecap="round" stroke-linejoin="round"/>
<path d="M813.700 1013.500 l4.300 4.300 -4.300 4.300" fill="none" stroke="#d6d6d6" stroke-width="1.900" stroke-linecap="round" stroke-linejoin="round"/>
</svg>
<!-- ===== collapsed dock ===== -->
<div class="a" style="left:1177px;top:129px;width:40px;height:1.500px;background:#474747;"></div>
<div class="a" style="left:1177px;top:173px;width:40px;height:1.500px;background:#474747;"></div>
<svg style="left:1174px;top:43px" width="746" height="140" viewBox="1174 43 746 140">
<path d="M1206.300 46.600 l-3.200 3 3.200 3z M1210.500 46.600 l-3.200 3 3.200 3z" fill="#cfcfcf"/>
<path d="M1656 46.600 l3.200 3 -3.200 3z M1660.200 46.600 l3.200 3 -3.200 3z" fill="#cfcfcf"/>
<path d="M1905 46.600 l3.200 3 -3.200 3z M1909.200 46.600 l3.200 3 -3.200 3z" fill="#cfcfcf"/>
<path d="M1187 62 h20 M1187 136.600 h20" stroke="#6c6c6c" stroke-width="1.600" stroke-dasharray="1.400 1.400"/>
<!-- character: stacked squares -->
<g fill="#545454" stroke="#c4c4c4" stroke-width="1.300">
<rect x="1188.600" y="82" width="6" height="6"/><rect x="1191.600" y="85" width="6" height="6" fill="#c4c4c4"/>
<rect x="1188.600" y="111.500" width="6" height="6"/><rect x="1191.600" y="114.500" width="6" height="6" fill="#c4c4c4"/>
</g>
<!-- paragraph pilcrow drawn as icon strokes -->
<path d="M1202.300 103.600 a3.600 3.600 0 0 0 0 7.200 z" fill="#c8c8c8"/>
<path d="M1202.300 103.600 v12.600 M1205.300 103.600 v12.600 M1200 103.600 h7" stroke="#c8c8c8" stroke-width="1.500" fill="none"/>
<!-- pathfinder -->
<rect x="1188" y="146.600" width="11.400" height="14.600" rx="1.500" fill="none" stroke="#c4c4c4" stroke-width="1.500"/>
<rect x="1192.400" y="154.600" width="14.600" height="11.600" rx="1.500" fill="#6a6a6a" stroke="#c4c4c4" stroke-width="1.500"/>
</svg>
<div class="a" style="left:1196px;top:70px;width:13px;height:17px;line-height:17px;font-size:16.500px;color:#c8c8c8;text-align:center;filter:blur(.25px);">A</div>
<!-- ===== colour panel ===== -->
<div class="a" style="left:1219px;top:57px;width:449px;height:28px;background:#494949;"></div>
<div class="a" style="left:1286px;top:57px;width:55px;height:28px;background:#575757;"></div>
<div class="a" style="left:1286px;top:58px;width:1px;height:27px;background:#424242;"></div>
<div class="a" style="left:1341px;top:58px;width:1px;height:27px;background:#424242;"></div>
<div class="a" style="left:1420px;top:58px;width:1px;height:27px;background:#424242;"></div>
<div class="t dim" style="left:1229.500px;top:63px;">Swatches</div>
<div class="t wh" style="left:1303.500px;top:63px;">Color</div>
<div class="t dim" style="left:1351px;top:63px;">Color Guide</div>
<div class="a" style="left:1219px;top:445.500px;width:449px;height:1.500px;background:#4a4a4a;"></div>
<!-- fill / stroke mini swatches -->
<div class="a" style="left:1226px;top:95.500px;width:14px;height:14.500px;background:#f1f1f1;"></div>
<div class="a" style="left:1240px;top:95.500px;width:14px;height:14.500px;background:#171717;"></div>
<div class="a" style="left:1254px;top:95.500px;width:14px;height:14.500px;background:#f1f1f1;"></div>
<!-- hex -->
<div class="fld" style="left:1588px;top:93.500px;width:62px;height:19.500px;background:#494949;"></div>
<div class="t" style="left:1593.500px;top:96.500px;color:#e6e6e6;">666766</div>
<div class="t" style="left:1572px;top:95.500px;font-size:10px;color:#cfcfcf;">#</div>
<!-- spectrum -->
<div class="a" id="spectrum" style="left:1227px;top:121.5px;width:423px;height:317px;overflow:hidden;">
<div class="a" style="left:0;top:0;width:423px;height:317px;background:linear-gradient(to right,rgb(238,232,232) 0%,rgb(240,240,236) 15%,rgb(238,240,240) 50%,rgb(240,236,240) 85%,rgb(238,230,232) 100%);"></div>
<div class="a" style="left:0;top:0;width:423px;height:317px;background:linear-gradient(to right,rgb(230,170,175) 0%,rgb(235,205,190) 8%,rgb(235,235,185) 15%,rgb(220,230,185) 22%,rgb(190,220,170) 32%,rgb(200,225,195) 40%,rgb(200,225,220) 48%,rgb(180,218,235) 55%,rgb(190,205,228) 60%,rgb(180,175,215) 66%,rgb(195,180,215) 72%,rgb(215,185,215) 80%,rgb(228,180,212) 88%,rgb(230,170,200) 93%,rgb(228,160,170) 100%);-webkit-mask-image:linear-gradient(to bottom,rgba(0,0,0,0) 0%,rgba(0,0,0,1) 12%);mask-image:linear-gradient(to bottom,rgba(0,0,0,0) 0%,rgba(0,0,0,1) 12%);"></div>
<div class="a" style="left:0;top:0;width:423px;height:317px;background:linear-gradient(to right,rgb(220,100,110) 0%,rgb(225,110,115) 3%,rgb(230,160,130) 8%,rgb(235,200,130) 12%,rgb(232,232,130) 16%,rgb(200,222,130) 22%,rgb(160,210,115) 30%,rgb(150,205,105) 33%,rgb(160,210,140) 40%,rgb(160,210,200) 48%,rgb(130,205,230) 55%,rgb(140,170,210) 60%,rgb(125,120,180) 66%,rgb(150,125,185) 72%,rgb(190,130,185) 80%,rgb(215,125,180) 88%,rgb(220,105,165) 93%,rgb(215,95,120) 100%);-webkit-mask-image:linear-gradient(to bottom,rgba(0,0,0,0) 12%,rgba(0,0,0,1) 25%);mask-image:linear-gradient(to bottom,rgba(0,0,0,0) 12%,rgba(0,0,0,1) 25%);"></div>
<div class="a" style="left:0;top:0;width:423px;height:317px;background:linear-gradient(to right,rgb(215,55,70) 0%,rgb(220,65,70) 3%,rgb(225,120,80) 8%,rgb(232,180,80) 12%,rgb(232,232,80) 15.5%,rgb(185,215,70) 22%,rgb(140,200,70) 30%,rgb(125,195,70) 34%,rgb(135,200,100) 40%,rgb(135,200,170) 47%,rgb(130,200,205) 51%,rgb(90,195,225) 55%,rgb(100,150,200) 59%,rgb(85,90,160) 65%,rgb(115,90,160) 71%,rgb(155,90,160) 78%,rgb(185,90,160) 86%,rgb(210,50,145) 91%,rgb(215,50,100) 95%,rgb(210,50,70) 100%);-webkit-mask-image:linear-gradient(to bottom,rgba(0,0,0,0) 25%,rgba(0,0,0,1) 36%);mask-image:linear-gradient(to bottom,rgba(0,0,0,0) 25%,rgba(0,0,0,1) 36%);"></div>
<div class="a" style="left:0;top:0;width:423px;height:317px;background:linear-gradient(to right,rgb(200,30,50) 0%,rgb(216,34,46) 2%,rgb(215,90,45) 7%,rgb(230,150,40) 11%,rgb(230,230,40) 15.6%,rgb(170,210,60) 22%,rgb(115,195,70) 30%,rgb(105,190,75) 35%,rgb(115,195,75) 40%,rgb(120,195,150) 45%,rgb(120,195,200) 50%,rgb(60,190,220) 54%,rgb(70,130,190) 57%,rgb(65,90,160) 61%,rgb(70,80,155) 68%,rgb(100,80,155) 75%,rgb(150,75,155) 82%,rgb(185,70,150) 88%,rgb(210,0,130) 91%,rgb(210,20,70) 95%,rgb(205,30,45) 100%);-webkit-mask-image:linear-gradient(to bottom,rgba(0,0,0,0) 36%,rgba(0,0,0,1) 50%);mask-image:linear-gradient(to bottom,rgba(0,0,0,0) 36%,rgba(0,0,0,1) 50%);"></div>
<div class="a" style="left:0;top:0;width:423px;height:317px;background:linear-gradient(to right,rgb(150,25,45) 0%,rgb(150,30,45) 3%,rgb(150,75,45) 8%,rgb(160,120,50) 12%,rgb(165,170,65) 16.5%,rgb(125,165,70) 22%,rgb(70,165,75) 28%,rgb(45,170,80) 35%,rgb(40,175,80) 40%,rgb(40,170,110) 45%,rgb(45,165,145) 50%,rgb(35,130,150) 54%,rgb(30,95,155) 58%,rgb(50,60,135) 63%,rgb(55,50,125) 68%,rgb(80,45,130) 75%,rgb(110,40,135) 80%,rgb(140,30,135) 85%,rgb(145,30,115) 89%,rgb(140,25,80) 93%,rgb(140,30,45) 100%);-webkit-mask-image:linear-gradient(to bottom,rgba(0,0,0,0) 50%,rgba(0,0,0,1) 71%);mask-image:linear-gradient(to bottom,rgba(0,0,0,0) 50%,rgba(0,0,0,1) 71%);"></div>
<div class="a" style="left:0;top:0;width:423px;height:317px;background:linear-gradient(to right,rgb(95,25,35) 0%,rgb(100,50,35) 8%,rgb(95,95,50) 16%,rgb(75,95,50) 22%,rgb(45,100,55) 30%,rgb(35,105,55) 38%,rgb(35,100,70) 45%,rgb(35,100,95) 50%,rgb(30,75,95) 55%,rgb(35,50,90) 60%,rgb(40,35,85) 68%,rgb(55,30,85) 75%,rgb(90,30,90) 83%,rgb(95,20,75) 89%,rgb(90,20,50) 94%,rgb(85,25,35) 100%);-webkit-mask-image:linear-gradient(to bottom,rgba(0,0,0,0) 71%,rgba(0,0,0,1) 85%);mask-image:linear-gradient(to bottom,rgba(0,0,0,0) 71%,rgba(0,0,0,1) 85%);"></div>
<div class="a" style="left:0;top:0;width:423px;height:317px;background:linear-gradient(to right,rgb(30,22,24) 0%,rgb(24,28,24) 30%,rgb(22,22,28) 60%,rgb(30,20,24) 100%);-webkit-mask-image:linear-gradient(to bottom,rgba(0,0,0,0) 85%,rgba(0,0,0,1) 100%);mask-image:linear-gradient(to bottom,rgba(0,0,0,0) 85%,rgba(0,0,0,1) 100%);"></div>
</div>
<svg style="left:1219px;top:57px" width="449" height="60" viewBox="1219 57 449 60">
<path d="M1292.500 68.600 l2.700 -3.200 2.700 3.200z M1292.500 72.100 l2.700 3.200 2.700 -3.200z" fill="#a8a8a8"/>
<path d="M1651.500 66.300 h10.500 M1651.500 69.300 h10.500 M1651.500 72.300 h10.500 M1651.500 75.100 h10.500" stroke="#a0a0a0" stroke-width="1.400"/>
<path d="M1226.800 109.200 L1239.200 96.300" stroke="#c4203c" stroke-width="2"/>
<path d="M1571.500 110.500 h9" stroke="#8c8c8c" stroke-width="1" stroke-dasharray="1 1"/>
</svg>
<!-- ===== layers panel ===== -->
<div class="a" style="left:1672px;top:57px;width:248px;height:28px;background:#494949;"></div>
<div class="a" style="left:1744.500px;top:57px;width:50px;height:28px;background:#555555;"></div>
<div class="a" style="left:1744px;top:58px;width:1px;height:27px;background:#424242;"></div>
<div class="a" style="left:1794.5px;top:58px;width:1px;height:27px;background:#424242;"></div>
<div class="a" style="left:1857px;top:58px;width:1px;height:27px;background:#424242;"></div>
<div class="t dim" style="left:1681.500px;top:63px;">Properties</div>
<div class="t wh" style="left:1753.500px;top:63px;">Layers</div>
<div class="t dim" style="left:1804.500px;top:63px;">Libraries</div>
<div class="a" style="left:1677px;top:90px;width:237px;height:985px;border:1px solid #5c5c5c;box-sizing:border-box;"></div>
<div class="fld" style="left:1685px;top:98.500px;width:196.500px;height:22px;background:#484848;"></div>
<div class="t" style="left:1714px;top:102.500px;font-size:11.500px;font-weight:normal;letter-spacing:0;color:#5e5e5e;">Search All</div>
<div class="a" style="left:1678px;top:131.6px;width:235px;height:22.300px;background:#555555;border-bottom:1px solid #4c4c4c;box-sizing:border-box;"></div>
<div class="a" style="left:1724px;top:132.6px;width:4.500px;height:20.300px;background:#c452c9;"></div>
<div class="a" style="left:1756.500px;top:133.8px;width:18px;height:18px;background:#efefef;"></div>
<div class="t" style="left:1780px;top:135.9px;color:#e0e0e0;">Silhouette</div>
<div class="a" style="left:1678px;top:154.4px;width:235px;height:22.300px;background:#555555;border-bottom:1px solid #4c4c4c;box-sizing:border-box;"></div>
<div class="a" style="left:1724px;top:155.4px;width:4.500px;height:20.300px;background:#5b80d2;"></div>
<div class="a" style="left:1756.500px;top:156.6px;width:18px;height:18px;background:#efefef;"></div>
<div class="t" style="left:1780px;top:158.7px;color:#e0e0e0;">Stitches</div>
<div class="a" style="left:1678px;top:177.2px;width:235px;height:22.300px;background:#555555;border-bottom:1px solid #4c4c4c;box-sizing:border-box;"></div>
<div class="a" style="left:1724px;top:178.2px;width:4.500px;height:20.300px;background:#4c4dc4;"></div>
<div class="a" style="left:1756.500px;top:179.4px;width:18px;height:18px;background:#efefef;"></div>
<div class="t" style="left:1780px;top:181.5px;color:#e0e0e0;">Shadows</div>
<div class="a" style="left:1678px;top:200.0px;width:235px;height:22.300px;background:#555555;border-bottom:1px solid #4c4c4c;box-sizing:border-box;"></div>
<div class="a" style="left:1724px;top:201.0px;width:4.500px;height:20.300px;background:#d2424f;"></div>
<div class="a" style="left:1756.500px;top:202.2px;width:18px;height:18px;background:#efefef;"></div>
<div class="t" style="left:1780px;top:204.3px;color:#e0e0e0;">Color</div>
<div class="a" style="left:1699.500px;top:131.600px;width:1px;height:91px;background:#4c4c4c;"></div>
<div class="a" style="left:1873.500px;top:131.600px;width:1px;height:91px;background:#4c4c4c;"></div>
<svg style="left:1672px;top:57px" width="248" height="180" viewBox="1672 57 248 180">
<path d="M1902 66.300 h10.500 M1902 69.300 h10.500 M1902 72.300 h10.500 M1902 75.100 h10.500" stroke="#a0a0a0" stroke-width="1.400"/>
<circle cx="1695.500" cy="107.500" r="3.900" fill="none" stroke="#d0d0d0" stroke-width="1.700"/><path d="M1698.500 110.700 L1702.600 114.800" stroke="#d0d0d0" stroke-width="2.200" stroke-linecap="round"/>
<path d="M1892.500 102.200 h15.500 l-6 7 v7.500 l-3.500 -2 v-5.500z" fill="#d6d6d6"/>
<path d="M1681.800 142.8 q6.700 -7.600 13.400 0 q-6.700 7.600 -13.400 0z" fill="#d2d2d2"/><circle cx="1688.500" cy="142.8" r="2.500" fill="#555"/><circle cx="1688.500" cy="142.8" r="1.100" fill="#d2d2d2"/>
<path d="M1737.200 138.8 l4 4 -4 4" fill="none" stroke="#d6d6d6" stroke-width="1.800" stroke-linecap="round" stroke-linejoin="round"/>
<circle cx="1885.400" cy="142.8" r="3.700" fill="none" stroke="#c8c8c8" stroke-width="1.300"/>
<path d="M1681.800 165.6 q6.700 -7.600 13.400 0 q-6.700 7.600 -13.400 0z" fill="#d2d2d2"/><circle cx="1688.500" cy="165.6" r="2.500" fill="#555"/><circle cx="1688.500" cy="165.6" r="1.100" fill="#d2d2d2"/>
<path d="M1737.200 161.6 l4 4 -4 4" fill="none" stroke="#d6d6d6" stroke-width="1.800" stroke-linecap="round" stroke-linejoin="round"/>
<circle cx="1885.400" cy="165.6" r="3.700" fill="none" stroke="#c8c8c8" stroke-width="1.300"/>
<path d="M1737.200 184.4 l4 4 -4 4" fill="none" stroke="#d6d6d6" stroke-width="1.800" stroke-linecap="round" stroke-linejoin="round"/>
<circle cx="1885.400" cy="188.4" r="3.700" fill="none" stroke="#c8c8c8" stroke-width="1.300"/>
<path d="M1681.800 211.2 q6.700 -7.600 13.400 0 q-6.700 7.600 -13.400 0z" fill="#d2d2d2"/><circle cx="1688.500" cy="211.2" r="2.500" fill="#555"/><circle cx="1688.500" cy="211.2" r="1.100" fill="#d2d2d2"/>
<path d="M1737.200 207.2 l4 4 -4 4" fill="none" stroke="#d6d6d6" stroke-width="1.800" stroke-linecap="round" stroke-linejoin="round"/>
<circle cx="1885.400" cy="211.2" r="3.700" fill="none" stroke="#c8c8c8" stroke-width="1.300"/>
<g fill="none" stroke="#9a9a9a" stroke-width=".9"><path d="M1759 140 l2 -1.500 h2 l2 1.500 -1 1.500 v6 h-4 v-6z M1767 140 l2 -1.500 h2 l2 1.500 -1 1.500 v6 h-4 v-6z"/></g>
<g fill="none" stroke="#b0b0b0" stroke-width=".9" stroke-dasharray="1.200 1"><path d="M1759 162 h5 M1767 162 h5 M1759 166 l5 3 M1767 169 l5 -3 M1759.500 172 h4 M1767.500 172 h4"/></g>
<g fill="none" stroke="#dcdcdc" stroke-width=".9"><path d="M1760 186 v8 M1764.500 186 v8 M1768 186 v8 M1772.500 186 v8"/></g>
<circle cx="1885.400" cy="211.200" r="6.200" fill="none" stroke="#8f8f8f" stroke-width="1.600"/>
<rect x="1897.200" y="207" width="8" height="8" fill="#d8404e" stroke="#ef6a74" stroke-width=".8"/>
<path d="M1906 200.500 h6.500 v6.500z" fill="#e6e6e6"/>
</svg>
</body>
</html>
